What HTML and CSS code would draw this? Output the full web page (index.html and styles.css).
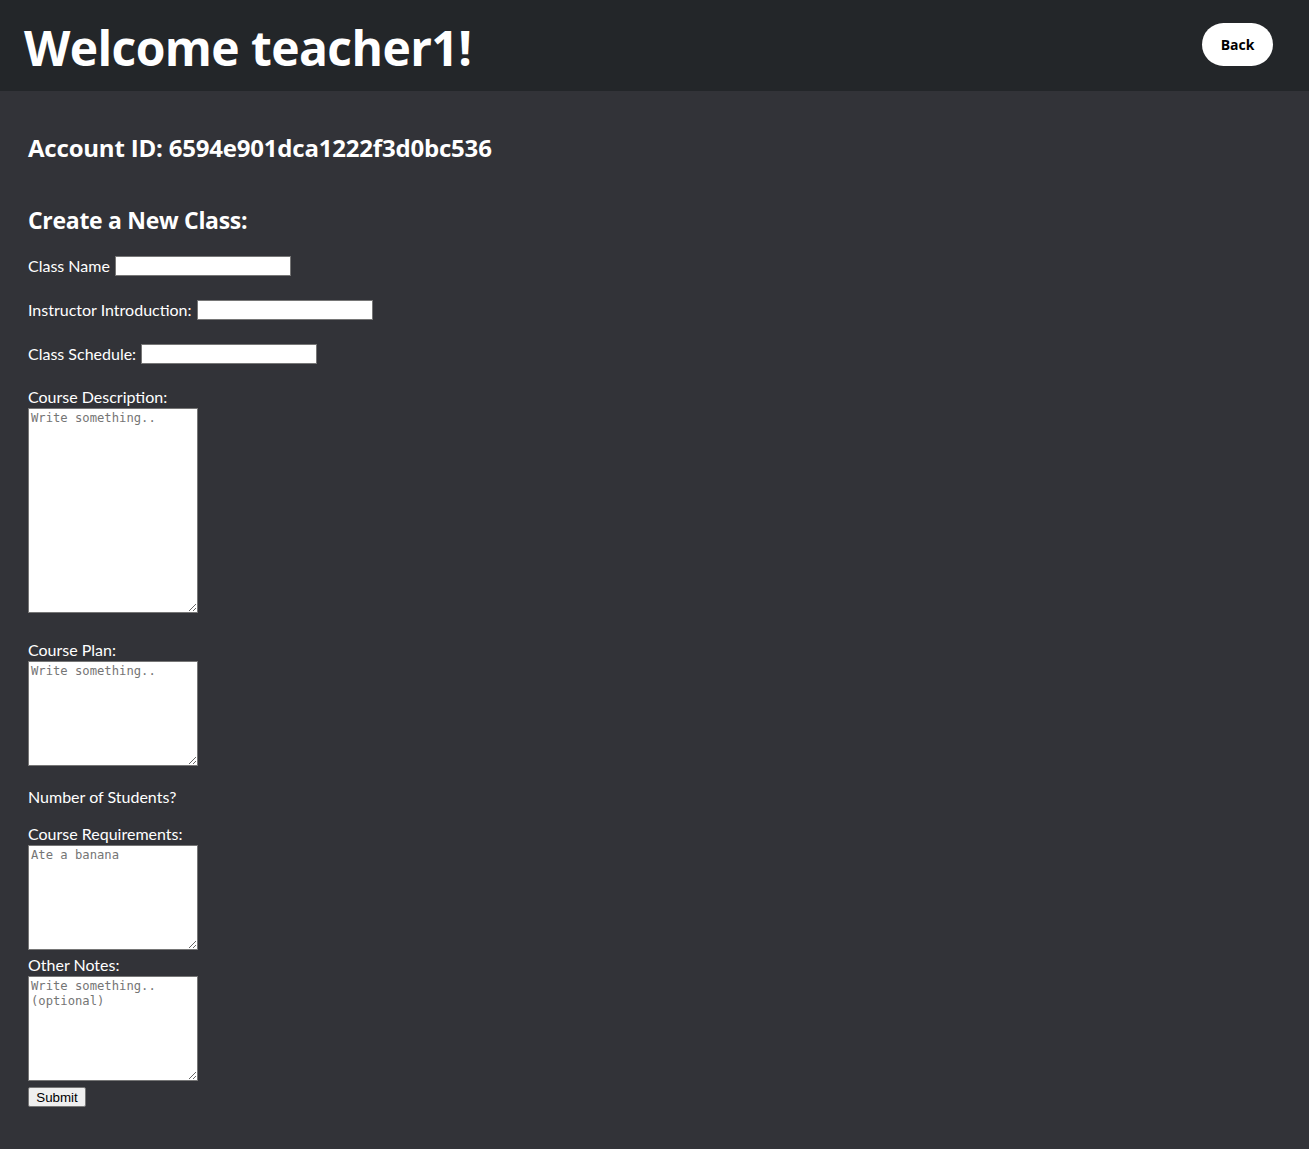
FILE: index.html
```html
<!DOCTYPE html>
<html>
<head>
<meta charset="utf-8">
<title>Teacher</title>
<link rel="stylesheet" href="styles.css">
</head>
<body>
<header class="topbar">
  <h1 class="title">Welcome teacher1!</h1>
  <button class="back-btn">Back</button>
</header>
<main class="content">
  <h2 class="heading account">Account ID: 6594e901dca1222f3d0bc536</h2>
  <h2 class="heading create">Create a New Class:</h2>
  <form class="class-form">
    <div class="field-row"><label>Class Name</label><input class="text-input" type="text"></div>
    <div class="field-row"><label>Instructor Introduction:</label><input class="text-input" type="text"></div>
    <div class="field-row"><label>Class Schedule:</label><input class="text-input" type="text"></div>
    <label class="block-label">Course Description:</label>
    <textarea class="area area-tall" placeholder="Write something.."></textarea>
    <label class="block-label plan-label">Course Plan:</label>
    <textarea class="area" placeholder="Write something.."></textarea>
    <div class="students">Number of Students?</div>
    <label class="block-label req-label">Course Requirements:</label>
    <textarea class="area" placeholder="Ate a banana"></textarea>
    <label class="block-label notes-label">Other Notes:</label>
    <textarea class="area" placeholder="Write something.. (optional)"></textarea>
    <button class="submit-btn" type="button">Submit</button>
  </form>
</main>
</body>
</html>
```

FILE: styles.css
```css
html, body {
  margin: 0;
  padding: 0;
}
body {
  background: #323338;
  color: #ffffff;
  font-family: "Lato", "Open Sans", sans-serif;
  min-height: 1149px;
}
.topbar {
  background: #232629;
  height: 91px;
  display: flex;
  align-items: center;
  justify-content: space-between;
  padding: 0 36px 0 24px;
  box-sizing: border-box;
}
.title {
  margin: 0;
  font-family: "Open Sans", "Lato", sans-serif;
  font-weight: 700;
  font-size: 48px;
  letter-spacing: -0.6px;
  line-height: 1;
  padding-top: 5px;
}
.back-btn {
  width: 71px;
  height: 43px;
  border: none;
  border-radius: 22px;
  background: #ffffff;
  color: #000;
  font-family: "Open Sans", "Lato", sans-serif;
  font-weight: 700;
  font-size: 14px;
  padding: 0;
  margin-top: -2px;
}
.content {
  padding: 0 28px 40px;
}
.heading {
  margin: 0;
  font-family: "Open Sans", "Lato", sans-serif;
  font-weight: 700;
  line-height: 30px;
}
.account {
  padding-top: 42px;
  font-size: 24px;
  letter-spacing: -0.2px;
}
.create {
  padding-top: 42px;
  font-size: 23px;
  letter-spacing: -0.3px;
}
.class-form {
  display: flex;
  flex-direction: column;
  align-items: flex-start;
  padding-top: 20px;
  font-size: 16px;
}
.field-row {
  display: flex;
  align-items: center;
  height: 20px;
  margin-bottom: 24px;
}
.field-row label {
  margin-right: 5px;
}
.text-input {
  width: 176px;
  height: 20px;
  box-sizing: border-box;
  border: 1px solid #767676;
  background: #fff;
  padding: 1px 2px;
  margin: 2px 0 0;
}
.block-label {
  display: block;
  line-height: 20px;
  height: 20px;
  margin-top: 0;
}
.plan-label {
  margin-top: 27px;
}
.req-label {
  margin-top: 17px;
}
.notes-label {
  margin-top: 5px;
}
.area {
  display: block;
  box-sizing: border-box;
  width: 170px;
  height: 105px;
  margin: 1px 0 0;
  border: 1px solid #767676;
  padding: 2px;
  font-family: "DejaVu Sans Mono", "Liberation Mono", monospace;
  font-size: 12.2px;
  line-height: 15px;
  background: #fff;
  resize: both;
}
.area::placeholder {
  color: #757575;
}
.area-tall {
  height: 205px;
}
.students {
  margin-top: 21px;
  line-height: 20px;
  height: 20px;
}
.submit-btn {
  margin-top: 6px;
  height: 20px;
  width: 58px;
  padding: 0;
  font-family: "Liberation Sans", Arial, sans-serif;
  font-size: 13.33px;
  color: #000;
  background: #efefef;
  border: 1px solid #767676;
  border-radius: 2px;
}
```
